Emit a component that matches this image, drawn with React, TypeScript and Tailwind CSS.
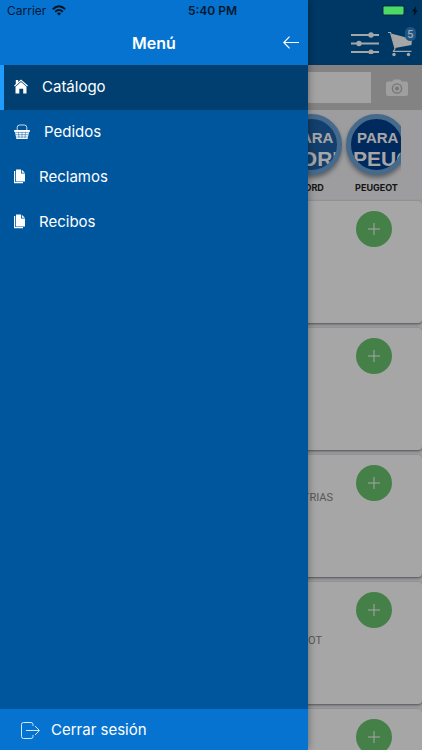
import React from "react";

const HomeIcon = () => (
  <svg width="14" height="15" viewBox="0 0 14 15" fill="#fff" aria-hidden="true">
    <path d="M1.800 1h2.400v2L7 .5l6.900 6-.8.9L7 2.100 .9 7.400 .1 6.500 1.800 5z" />
    <path d="M7 2.900l5.500 4.800V14.500H9.200V9.700H5.300v4.800H1.500V7.700z" />
  </svg>
);

const BasketIcon = () => (
  <svg width="16" height="16" viewBox="0 0 16 16" fill="none" stroke="#fff" aria-hidden="true">
    <path d="M3.200 7V3.500Q3.200 1 5.700 1h4.600q2.500 0 2.500 2.500V7" strokeWidth="0.8" />
    <path d="M.2 6h15.600v1.900h-.8L13.600 15H2.400L1 7.900H.2z" fill="#fff" stroke="none" />
    <path d="M1.500 8.400h13M1.800 10.700h12.400M2.300 13h11.400M4.500 8.200l.6 6M8 8.200v6M11.500 8.200l-.6 6" stroke="#00569d" strokeWidth="0.5" />
  </svg>
);

const FilesIcon = () => (
  <svg width="11" height="15" viewBox="0 0 11 15" fill="#fff" aria-hidden="true">
    <path d="M0 2h1.200v11H9v1.200H0z" />
    <path d="M2 .5h5v4h4v8H2z" />
    <path d="M7.800 .7L10.900 3.700H7.800z" />
  </svg>
);

const menu = [
  { label: "Catálogo", icon: <HomeIcon />, active: true },
  { label: "Pedidos", icon: <BasketIcon />, active: false },
  { label: "Reclamos", icon: <FilesIcon />, active: false },
  { label: "Recibos", icon: <FilesIcon />, active: false },
];

const brands = [
  { name: "FORD", disc: "bg-[#1d62a8]" },
  { name: "PEUGEOT", disc: "bg-[#00408f]" },
];

const products = [
  { id: 1, maker: "", row: "" },
  { id: 2, maker: "", row: "" },
  { id: 3, maker: "INDUSTRIAS", row: "w-[333px] pt-[37px]" },
  { id: 4, maker: "PEUGEOT", row: "w-[322px] pt-[53px]" },
  { id: 5, maker: "", row: "" },
];

function StatusBar() {
  return (
    <div className="absolute inset-x-0 top-0 z-30 grid h-[21px] grid-cols-3 items-center pl-[7px] pr-1 text-black/80">
      <div className="flex items-center gap-1.5">
        <span className="text-[12px]">Carrier</span>
        <svg width="14" height="11" viewBox="0 0 14 11" fill="none" stroke="#06131f" strokeWidth="2" aria-hidden="true">
          <path d="M.8 4.200Q7-1.600 13.200 4.200M3.200 6.700q3.800-3.400 7.600 0" />
          <path d="M7 10.500L4.900 8.400q2.100-1.700 4.200 0z" fill="#06131f" stroke="none" />
        </svg>
      </div>
      <span className="text-center text-[12px] font-semibold">5:40 PM</span>
      <div className="flex items-center justify-end gap-1">
        <svg width="26" height="11" viewBox="0 0 26 11" aria-hidden="true">
          <rect x=".5" y=".5" width="22" height="10" rx="2" fill="none" stroke="#052a4b" />
          <rect x="1.500" y="1.500" width="20" height="8" rx="1" fill="#4cd964" />
          <path d="M24 3.500q1.800 2 0 4z" fill="#052a4b" />
        </svg>
        <svg width="6" height="10" viewBox="0 0 6 10" aria-hidden="true">
          <path d="M4.200 0L0 5.600h2.500L1.600 10 6 4.200H3.400z" fill="#04101c" />
        </svg>
      </div>
    </div>
  );
}

function Catalog() {
  return (
    <main className="flex h-full flex-col overflow-hidden bg-[#f3f4f8]">
      <header className="flex h-[65px] shrink-0 items-end justify-end gap-2 bg-[#00569c] pb-2 pr-1.5">
        <button aria-label="Filtros" className="mb-[3px] mr-px">
          <svg width="28" height="22" viewBox="0 0 28 22" fill="#fff" stroke="#fff" strokeWidth="1.800">
            <path d="M0 3h28M0 11.500h28M0 20h28" />
            <circle cx="20" cy="3" r="1.800" />
            <circle cx="8" cy="11.500" r="1.800" />
            <circle cx="20" cy="20" r="1.600" />
          </svg>
        </button>
        <button aria-label="Carrito" className="relative w-7">
          <svg width="26" height="26" viewBox="0 0 26 26" fill="none" stroke="#fff">
            <path d="M0 1.500h2.500L7 17.500l-1.500 2.800H23.500" strokeWidth="1.200" />
            <path d="M3 2.500L24 8l-.5 6L7 17z" fill="#fff" stroke="none" />
            <circle cx="6" cy="23.500" r="1.700" fill="#fff" stroke="none" />
            <circle cx="20.500" cy="23.500" r="1.700" fill="#fff" stroke="none" />
          </svg>
          <span className="absolute -top-1 right-0 flex h-3.5 w-[11px] items-center justify-center rounded-full bg-[#2d86cf] text-[10px] font-semibold text-white">5</span>
        </button>
      </header>
      <div className="flex h-[45px] shrink-0 items-center bg-[#cacaca]">
        <input aria-label="Buscar" type="search" className="ml-2 h-[31px] min-w-0 flex-1 bg-[#fbfbfb]" />
        <button aria-label="Buscar por foto" className="flex w-[51px] justify-center">
          <svg width="22" height="18" viewBox="0 0 22 18">
            <path d="M2 2.500h4L8 .5h6l2 2h4q2 0 2 2V15q0 2-2 2H2q-2 0-2-2V4.500q0-2 2-2z" fill="#f4f4f4" />
            <circle cx="11" cy="9.500" r="4.600" fill="none" stroke="#b5b5b5" strokeWidth="1.400" />
            <circle cx="11" cy="9.500" r="2" fill="#b5b5b5" />
          </svg>
        </button>
      </div>
      <div className="h-[91px] shrink-0 bg-[#f1f1f6] pr-[21px]">
        <nav className="flex h-full justify-end gap-1 overflow-hidden pt-1">
          {brands.map((b) => (
            <a key={b.name} href="#catalogo" className="flex w-[61px] shrink-0 flex-col items-center last:-mr-1.5">
              <span
                className={`flex size-[61px] flex-col overflow-hidden rounded-full border-5 border-[#6aa3d8] pl-0.5 pt-2.5 font-['Liberation_Sans',sans-serif] font-bold text-white shadow-[0_3px_4px_#00000060] ${b.disc}`}
              >
                <span className="pl-1 text-[15px] leading-[18px]">PARA</span>
                <span className="text-[21px] leading-6">{b.name}</span>
              </span>
              <span className="mt-[5px] text-[9px] font-bold leading-4 text-[#222]">{b.name}</span>
            </a>
          ))}
        </nav>
      </div>
      <ul className="flex flex-col gap-[5px]">
        {products.map((p) => (
          <li key={p.id} className="flex h-[122px] shrink-0 items-start justify-between rounded bg-white shadow-[0_1px_3px_#00000088]">
            <span className={`text-right font-['Roboto',sans-serif] text-[11px] leading-3 text-[#888] ${p.row}`}>{p.maker}</span>
            <button aria-label="Agregar" className="mr-[30px] mt-2.5 flex size-9 items-center justify-center rounded-full bg-[#6cc570]">
              <svg width="12" height="12" viewBox="0 0 12 12" stroke="#fff">
                <path d="M6 0v12M0 6h12" />
              </svg>
            </button>
          </li>
        ))}
      </ul>
    </main>
  );
}

function Drawer() {
  return (
    <aside className="absolute inset-y-0 left-0 z-20 flex w-[308px] max-w-[85%] flex-col bg-[#00569d] text-white shadow-[0_0_8px_#00000066]">
      <header className="grid h-[65px] shrink-0 grid-cols-[1fr_auto_1fr] items-center bg-[#0573cf] px-[9px] pt-5">
        <h1 className="col-start-2 text-[16px] font-semibold">Menú</h1>
        <button aria-label="Cerrar menú" className="justify-self-end">
          <svg width="16" height="13" viewBox="0 0 16 13" fill="none" stroke="#fff" strokeWidth="1.200">
            <path d="M16 6.500H1M6.500 .7L.8 6.500l5.700 5.800" />
          </svg>
        </button>
      </header>
      <nav className="flex-1">
        {menu.map((m) => (
          <a
            key={m.label}
            href="#menu"
            className={`flex h-[45px] items-center gap-3.5 border-l-4 pb-0.5 pl-2.5 text-[15px] ${m.active ? "border-[#209cff] bg-[#003f70]" : "border-transparent"}`}
          >
            {m.icon}
            <span className="pt-0.5">{m.label}</span>
          </a>
        ))}
      </nav>
      <button className="flex h-[41px] shrink-0 items-center gap-[11px] bg-[#0573cf] pl-[21px] pt-0.5 text-[15px]">
        <svg width="19" height="17" viewBox="0 0 19 17" fill="none" stroke="#cfe6fb" aria-hidden="true">
          <path d="M12 4V2.500Q12 .5 10 .5H2.500Q.5 .5 .5 2.500v12q0 2 2 2H10q2 0 2-2V13M5 8.500h13M14 4l4.500 4.500L14 13" />
        </svg>
        <span>Cerrar sesión</span>
      </button>
    </aside>
  );
}

export default function App() {
  return (
    <div className="relative h-screen overflow-hidden font-['Inter','Liberation_Sans',sans-serif]">
      <Catalog />
      <div className="absolute inset-0 z-10 bg-black/35" />
      <Drawer />
      <StatusBar />
    </div>
  );
}
